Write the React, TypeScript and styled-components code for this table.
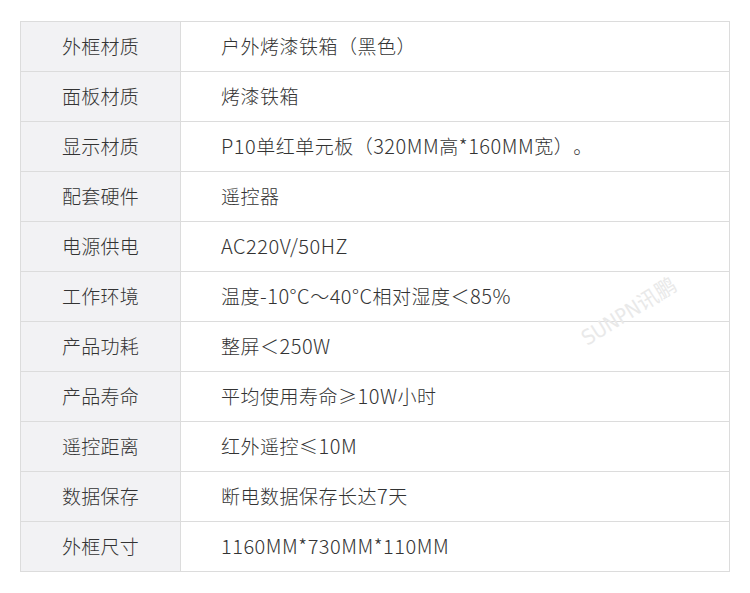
import React from "react";
import styled, { createGlobalStyle } from "styled-components";

const Global = createGlobalStyle`
  html, body { margin: 0; padding: 0; background: #ffffff; }
  body { font-family: "Noto Sans CJK SC", "Noto Sans", sans-serif; color: #333333; }
`;

const Page = styled.div`
  padding: 21px 0 0 20px;
`;

const Table = styled.div`
  position: relative;
  width: 708px;
  border: 1px solid #dcdcdc;
`;

const Row = styled.div`
  display: grid;
  grid-template-columns: 160px 1fr;
  height: 49px;
  & + & { border-top: 1px solid #dcdcdc; }
`;

const Cell = styled.div`
  display: flex;
  align-items: center;
  box-sizing: border-box;
  padding-bottom: 2px;
  font-size: 19px;
  font-weight: 300;
  color: #333333;
  white-space: nowrap;
  text-spacing-trim: space-all;
`;

const Label = styled(Cell)`
  justify-content: center;
  background: #f2f2f4;
  border-right: 1px solid #dcdcdc;
  letter-spacing: 0.3px;
`;

const Value = styled(Cell)`
  padding-left: 40px;
  letter-spacing: 0.5px;
`;

const Latin = styled.span`
  font-size: 20px;
`;

const Watermark = styled.div`
  position: absolute;
  left: 607px;
  top: 288px;
  transform: translate(-50%, -50%) rotate(-32deg);
  font-family: "DejaVu Sans Condensed", "DejaVu Sans", "Noto Sans CJK SC", sans-serif;
  font-size: 21px;
  font-weight: 400;
  color: #e9e9e9;
  pointer-events: none;
  white-space: nowrap;
`;

const rows: [string, string][] = [
  ["外框材质", "户外烤漆铁箱（黑色）"],
  ["面板材质", "烤漆铁箱"],
  ["显示材质", "P10单红单元板（320MM高*160MM宽）。"],
  ["配套硬件", "遥控器"],
  ["电源供电", "AC220V/50HZ"],
  ["工作环境", "温度-10°C～40°C相对湿度＜85%"],
  ["产品功耗", "整屏＜250W"],
  ["产品寿命", "平均使用寿命≥10W小时"],
  ["遥控距离", "红外遥控≤10M"],
  ["数据保存", "断电数据保存长达7天"],
  ["外框尺寸", "1160MM*730MM*110MM"],
];

function Mixed({ text }: { text: string }) {
  const parts = text.split(/([\x20-\x7E°]+)/).filter((p) => p.length > 0);
  return (
    <span>
      {parts.map((p, i) =>
        /^[\x20-\x7E°]+$/.test(p) ? <Latin key={i}>{p}</Latin> : <React.Fragment key={i}>{p}</React.Fragment>
      )}
    </span>
  );
}

export default function App() {
  return (
    <>
      <Global />
      <Page>
        <Table>
          {rows.map(([k, v]) => (
            <Row key={k}>
              <Label>{k}</Label>
              <Value>
                <Mixed text={v} />
              </Value>
            </Row>
          ))}
          <Watermark>SUNPN讯鹏</Watermark>
        </Table>
      </Page>
    </>
  );
}
